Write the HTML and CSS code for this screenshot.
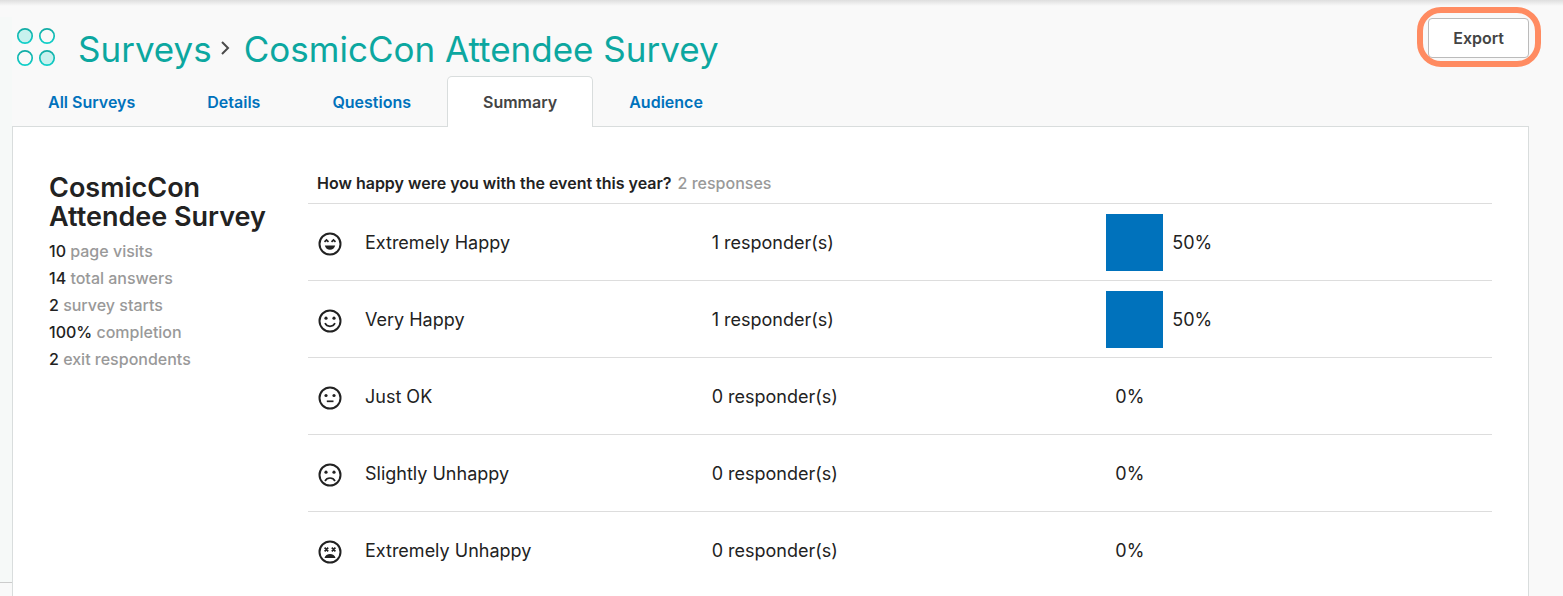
FILE: index.html
```html
<!DOCTYPE html>
<html lang="en">

<head>
  <meta charset="UTF-8">
  <meta name="viewport" content="width=device-width, initial-scale=1.0">
  <title>CosmicCon Attendee Survey</title>
  <link rel="stylesheet" href="styles.css">
</head>

<body>
  <div class="page">
    <div class="side-strip"></div>

    <main class="main">
      <!-- Title and export -->
      <header class="header">
        <svg class="logo" viewBox="0 0 40 40" aria-hidden="true">
          <defs>
            <linearGradient id="ring" x1="0" y1="0" x2="0" y2="1">
              <stop offset="0" stop-color="#12aca5"/>
              <stop offset="1" stop-color="#10cfc9"/>
            </linearGradient>
          </defs>
          <g fill="none" stroke="url(#ring)" stroke-width="1.7">
            <circle cx="9" cy="9" r="7.2" fill="#c8f1ee"/>
            <circle cx="31" cy="9" r="7.2"/>
            <circle cx="9" cy="31" r="7.2"/>
            <circle cx="31" cy="31" r="7.2" fill="#c8f1ee"/>
          </g>
        </svg>
        <h1 class="title">
          <a href="#">Surveys</a>
          <svg class="chevron" viewBox="0 0 10 14" aria-hidden="true"><path d="M2 1L8 7L2 13" fill="none" stroke="#4a4a4a" stroke-width="2"/></svg>
          <span>CosmicCon Attendee Survey</span>
        </h1>
        <div class="export">
          <button type="button">Export</button>
          <span class="ring"></span>
        </div>
      </header>

      <!-- Tabs -->
      <nav class="tabs">
        <a href="#">All Surveys</a>
        <a href="#">Details</a>
        <a href="#">Questions</a>
        <a href="#" class="active">Summary</a>
        <a href="#">Audience</a>
      </nav>

      <section class="panel">
        <!-- Left: Totals -->
        <div class="totals">
          <h2>CosmicCon Attendee Survey</h2>
          <ul>
            <li><b>10</b> page visits</li>
            <li><b>14</b> total answers</li>
            <li><b>2</b> survey starts</li>
            <li><b>100%</b> completion</li>
            <li><b>2</b> exit respondents</li>
          </ul>
        </div>

        <!-- Right: Answers -->
        <table class="answers">
          <caption>How happy were you with the event this year? <span>2 responses</span></caption>
          <tbody>
            <tr>
              <td>
                <div class="answer">
                  <svg class="face" viewBox="0 0 24 24"><circle cx="12" cy="12" r="10.500"/><path class="thin" d="M6.500 9.800L8.500 8L10.500 9.800M13.500 9.800L15.500 8L17.500 9.800"/><path class="solid" d="M6.800 13.500H17.200C16.500 16.300 14.500 17.700 12 17.700S7.500 16.300 6.800 13.500Z"/></svg>
                  Extremely Happy
                </div>
              </td>
              <td>1 responder(s)</td>
              <td><div class="result"><span class="track"><span class="bar" style="width: 50%"></span></span>50%</div></td>
            </tr>
            <tr>
              <td>
                <div class="answer">
                  <svg class="face" viewBox="0 0 24 24"><circle cx="12" cy="12" r="10.500"/><circle class="solid" cx="8" cy="9.200" r="1.600"/><circle class="solid" cx="16" cy="9.200" r="1.600"/><path class="thin" d="M7 14.200C8 16.300 9.800 17.300 12 17.300S16 16.300 17 14.200"/></svg>
                  Very Happy
                </div>
              </td>
              <td>1 responder(s)</td>
              <td><div class="result"><span class="track"><span class="bar" style="width: 50%"></span></span>50%</div></td>
            </tr>
            <tr>
              <td>
                <div class="answer">
                  <svg class="face" viewBox="0 0 24 24"><circle cx="12" cy="12" r="10.500"/><circle class="solid" cx="8" cy="9.500" r="1.600"/><circle class="solid" cx="16" cy="9.500" r="1.600"/><path class="thin" d="M8.800 15.300H15.500"/></svg>
                  Just OK
                </div>
              </td>
              <td>0 responder(s)</td>
              <td><div class="result empty">0%</div></td>
            </tr>
            <tr>
              <td>
                <div class="answer">
                  <svg class="face" viewBox="0 0 24 24"><circle cx="12" cy="12" r="10.500"/><circle class="solid" cx="8" cy="9.200" r="1.600"/><circle class="solid" cx="16" cy="9.200" r="1.600"/><path class="thin" d="M7 18C8 16 9.800 15 12 15S16 16 17 18"/></svg>
                  Slightly Unhappy
                </div>
              </td>
              <td>0 responder(s)</td>
              <td><div class="result empty">0%</div></td>
            </tr>
            <tr>
              <td>
                <div class="answer">
                  <svg class="face" viewBox="0 0 24 24"><circle cx="12" cy="12" r="10.500"/><path class="thin" d="M6.600 7.700L10.200 11.300M10.200 7.700L6.600 11.300M13.800 7.700L17.400 11.300M17.400 7.700L13.800 11.300"/><path class="solid" d="M6.500 18C7 15.200 9.500 14 12 14S17 15.200 17.500 18Z"/></svg>
                  Extremely Unhappy
                </div>
              </td>
              <td>0 responder(s)</td>
              <td><div class="result empty">0%</div></td>
            </tr>
          </tbody>
        </table>
      </section>
    </main>
  </div>
</body>

</html>
```
FILE: styles.css
```css
* {
    box-sizing: border-box;
}

/* General body styles */
body {
    margin: 0;
    background: #f9f9f9 linear-gradient(#dedede, #f9f9f9) no-repeat 0 0 / 100% 6px;
    color: #222;
    font-family: Inter, "Open Sans", sans-serif;
    font-size: 16px;
}

.page {
    display: flex;
    min-height: 100vh;
}

/* Edge of the collapsed side menu */
.side-strip {
    width: 12px;
    margin: 17px 0 13px;
    background: #f6f9f8;
    border-bottom: 1px solid #ccc;
}

.main {
    flex: 1;
    display: flex;
    flex-direction: column;
    padding-right: 34px;
}

/* Header */
.header {
    display: flex;
    height: 76px;
    padding-top: 18px;
}

.logo {
    width: 40px;
    height: 40px;
    margin: 9px 0 0 4px;
}

.title {
    flex: 1;
    display: flex;
    align-items: center;
    height: 62px;
    margin: 0 0 0 22px;
    color: #0ca7a0;
    font-size: 35px;
    font-weight: 400;
}

.title a {
    color: inherit;
    text-decoration: none;
}

.chevron {
    width: 10px;
    height: 14px;
    margin: 0 14px 2px 8px;
}

/* Export button with its highlight */
.export {
    position: relative;
    height: 40px;
}

.export button {
    height: 40px;
    padding: 0 24px;
    border: 1px solid #bbb;
    border-radius: 4px;
    background: #fff;
    color: #444;
    font: 600 16px Inter, sans-serif;
    cursor: pointer;
}

.export .ring {
    position: absolute;
    inset: -11px -12px -9px -11px;
    border: 6px solid #ff8b61;
    border-radius: 24px;
    pointer-events: none;
}

/* Tabs */
.tabs {
    display: flex;
    height: 50px;
}

.tabs a {
    padding: 0 35px;
    border: 1px solid transparent;
    border-bottom: none;
    border-radius: 5px 5px 0 0;
    color: #0072bc;
    font-weight: 600;
    line-height: 50px;
    text-decoration: none;
}

.tabs .active {
    height: 51px;
    border-color: #d9dddd;
    background: #fff;
    color: #444;
    z-index: 1;
}

/* Panel */
.panel {
    flex: 1;
    display: flex;
    align-items: flex-start;
    gap: 39px;
    padding: 46px 36px 0;
    border: 1px solid #d9dddd;
    border-bottom: none;
    background: #fff;
}

.totals {
    flex: 0 0 220px;
}

.totals h2 {
    margin: 0 0 7px;
    font-size: 27px;
    font-weight: 600;
    line-height: 29px;
}

.totals ul {
    margin: 0;
    padding: 0;
    list-style: none;
    color: #999;
    font-weight: 500;
    line-height: 27px;
}

.totals b {
    color: #222;
    font-weight: 500;
}

/* Answers table */
.answers {
    flex: 1;
    border-collapse: collapse;
    table-layout: fixed;
    font-size: 18px;
}

.answers caption {
    padding: 0 9px 10px;
    font-size: 16px;
    font-weight: 600;
    line-height: 20px;
    text-align: left;
}

.answers caption span {
    margin-left: 2px;
    color: #999;
    font-weight: 500;
}

.answers td {
    width: 33%;
    height: 77px;
    padding: 0 9px;
    border-top: 1px solid #ddd;
}

.answer {
    display: flex;
    align-items: center;
    gap: 23px;
}

.face {
    width: 24px;
    height: 24px;
    margin: 3px 0 0 1px;
    fill: none;
    stroke: #222;
    stroke-width: 2;
}

.face .thin {
    stroke-width: 1.7;
}

.face .solid {
    fill: #222;
    stroke: none;
}

.result {
    display: flex;
    align-items: center;
}

.result.empty {
    padding-left: 9px;
}

.track {
    width: 114px;
    margin-right: -48px;
}

.bar {
    display: block;
    height: 57px;
    background: #0072bc;
}
```
